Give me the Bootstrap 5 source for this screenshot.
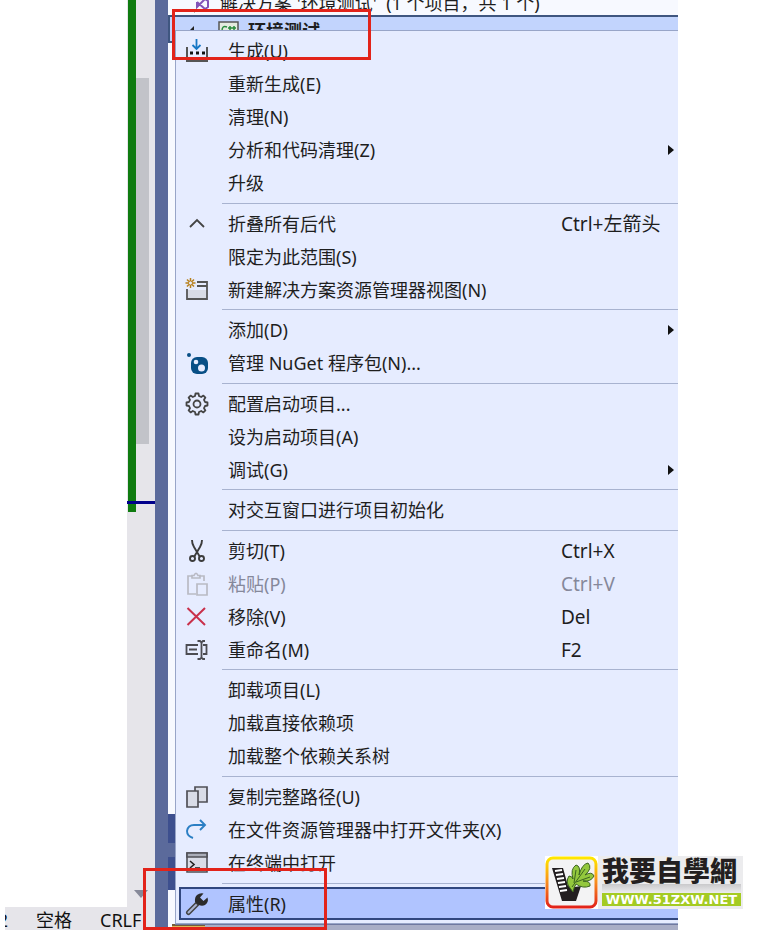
<!DOCTYPE html>
<html lang="zh-CN">
<head>
<meta charset="utf-8">
<meta name="viewport" content="width=device-width, initial-scale=1">
<title>解决方案资源管理器</title>
<link href="https://cdn.jsdelivr.net/npm/bootstrap@5.3.0/dist/css/bootstrap.min.css" rel="stylesheet">
<style>
body{font-family:"Noto Sans","Noto Sans CJK SC",sans-serif;font-size:18px;line-height:24px;color:#1e1e1e;background:#fff}
.ide{display:grid;grid-template-columns:155px 13px minmax(0,1fr) 97px;height:100vh}
.track{width:28px;background:#e6e5ea;padding-left:1px}
.changes{width:8px;height:512px;background:#0f7b10}
.thumb{width:13px;height:366px;margin-top:78px;background:#c2c3c9}
.caret-line{left:0;right:0;top:501px;height:3px;background:#00008b}
.down{right:7px;bottom:9px;border:7px solid transparent;border-top:8px solid #868999;border-bottom:0}
.status{height:23px;margin-left:5px;background:#e6e5ea;line-height:26px;color:#111}
.status .col-no{width:3px;margin-right:28px}
.status .col-sp{width:64px}
.frame{background:#5b6a9b}
.explorer{background:#f7f9ff}
.sol{height:15px;padding-left:26px}
.sol-name{padding-left:10px;margin-top:-9px}
.proj{height:28px;padding-left:17px;background:#c2d4fd;border:2px solid #3f5680;border-right:0}
.proj-name{padding:2px 0 0 8px;font-weight:700}
.tabs-side{width:7px;margin-top:771px}
.tab-dark{height:29px;background:#3d4f8e}
.tab-gap{height:14px;background:#5b6a9b}
.tab-low{height:33px;background:#3d4f8e}
.ctx{left:7px;right:0;top:30px;padding:3px 0 3px 3px;background:#e6ecff;border:1px solid #98a5c8;border-right:0;box-shadow:0 1px 0 #7079a0}
.mi{display:grid;grid-template-columns:49px minmax(0,1fr) 117px;align-items:center;width:100%;height:33px;padding:0;border:0;background:none;color:#1e1e1e;text-align:left;white-space:nowrap}
.mi svg{margin-left:6px}
.mi:disabled{color:#85889a}
.mi.sel{background:#b0c4ff;border:2px solid #31477f;border-right:0;padding-right:0;grid-template-columns:47px minmax(0,1fr)}
.mi.sel svg{margin-left:4px}
.keys{font-size:19px}
.arrow{justify-self:end;margin-right:4px;border:5px solid transparent;border-left:6px solid #111;border-right:0}
.sep{margin:3px 0 3px 43px;border:0;border-top:1px solid #a8b3d0;opacity:1}
.sep.roomy{margin-top:4px}
.below{left:7px;right:0;bottom:0;height:6px;background:#a9aec6}
.below-icon{width:33px;margin-left:-3px;background:#dfb558;border-top:2px solid #735d3a}
.mark-box{border:3px solid #e2231a;pointer-events:none}
.mark-top{left:172px;top:9px;width:199px;height:51px}
.mark-bottom{left:143px;top:868px;width:184px;height:62px}
.brand{right:32px;bottom:21px;height:53px;width:198px;background:#ececee;color:#231f20}
.brand-words{width:139px;margin-left:4px}
.brand-name{font-family:"Noto Sans CJK TC",sans-serif;font-weight:900;font-size:27px;line-height:28px;height:28px;white-space:nowrap}
.brand-shade{height:9px;background:linear-gradient(#c9c9cb,#ececee)}
.brand-url{height:13px;background:#a4cb23;color:#fff;font:bold 13px/13px "DejaVu Sans",sans-serif;text-align:center;text-decoration:none}
</style>
</head>
<body class="overflow-hidden">
<div class="position-relative">
<main class="ide">
  <section class="d-flex flex-column" aria-label="编辑器">
    <div class="d-flex flex-grow-1 justify-content-end">
      <div class="track d-flex position-relative">
        <div class="changes"></div><div class="thumb"></div>
        <div class="caret-line position-absolute"></div><div class="down position-absolute"></div>
      </div>
    </div>
    <footer class="status d-flex overflow-hidden"><span class="col-no d-flex justify-content-end overflow-hidden flex-shrink-0"><span>2</span></span><span class="col-sp">空格</span><span>CRLF</span></footer>
  </section>
  <div class="frame"></div>
  <section class="explorer position-relative overflow-hidden" aria-label="解决方案资源管理器">
    <div class="sol d-flex text-nowrap">
      <svg width="16" height="15" viewBox="0 0 16 15" fill="none"><path d="M-3 0V12H1" stroke="#777"/><path d="M3 2L11 9L14 7V1L11-1L3 7V2" stroke="#8152b8" stroke-width="2"/></svg>
      <span class="sol-name">解决方案 '环境测试'&nbsp; (1 个项目，共 1 个)</span>
    </div>
    <div class="proj d-flex">
      <svg class="mt-2" width="31" height="18" viewBox="0 0 31 18" fill="none"><path d="M7 0V7H0Z" transform="translate(0 1)" fill="#222"/></svg>
      <svg class="mt-1" width="22" height="20" viewBox="0 0 22 20" fill="none"><path d="M1 18V1H20V18Z" stroke="#555" fill="#e3eadf" stroke-width="1.5"/><path d="M9 6Q4 4 4 10M12 5V11M16 5V11M10 7H18M10 10H18" stroke="#278a3c" stroke-width="1.5"/></svg>
      <span class="proj-name">环境测试</span>
    </div>
    <div class="tabs-side"><div class="tab-dark"></div><div class="tab-gap"></div><div class="tab-low"></div></div>
    <div class="below position-absolute"><div class="below-icon h-100"></div></div>
    <div class="ctx position-absolute" role="menu">
      <button class="mi" role="menuitem"><svg width="24" height="26" viewBox="0 0 24 26" fill="none"><path d="M2 9V23H22V9" stroke="#555" stroke-width="2"/><path d="M3 19H21V22H3Z" fill="#777"/><path d="M5 15H8M11 15H14M17 15H20" stroke="#111" stroke-width="3"/><path d="M11.500 1V11M7.500 7L11.500 11L15.500 7" stroke="#1677c5" stroke-width="1.800"/></svg><span>生成(U)</span></button>
      <button class="mi" role="menuitem"><i></i><span>重新生成(E)</span></button>
      <button class="mi" role="menuitem"><i></i><span>清理(N)</span></button>
      <button class="mi" role="menuitem"><i></i><span>分析和代码清理(Z)</span><span class="arrow"></span></button>
      <button class="mi" role="menuitem"><i></i><span>升级</span></button>
      <hr class="sep roomy">
      <button class="mi" role="menuitem"><svg width="24" height="24" viewBox="0 0 24 24" fill="none"><path d="M5 15L12 8L19 15" stroke="#444" stroke-width="1.800"/></svg><span>折叠所有后代</span><span class="keys">Ctrl+左箭头</span></button>
      <button class="mi" role="menuitem"><i></i><span>限定为此范围(S)</span></button>
      <button class="mi" role="menuitem"><svg width="24" height="24" viewBox="0 0 24 24" fill="none"><path d="M3 12H21V20H3Z" fill="#d8dbe5"/><path d="M2 11V21H22V4H12M12 8H22" stroke="#555" stroke-width="1.800"/><path d="M5.500 0V3M5.500 7V10M.5 5H3.500M7.500 5H10.500M2 1.500L4 3.500M7 6.500L9 8.500M2 8.500L4 6.500M7 3.500L9 1.500" stroke="#b7801d" stroke-width="1.500"/><circle cx="5.500" cy="5" r="2" stroke="#b7801d"/></svg><span>新建解决方案资源管理器视图(N)</span></button>
      <hr class="sep">
      <button class="mi" role="menuitem"><i></i><span>添加(D)</span><span class="arrow"></span></button>
      <button class="mi" role="menuitem"><svg width="24" height="24" viewBox="0 0 24 24"><rect x="6" y="6" width="17" height="17" rx="6" fill="#084f86"/><circle cx="4" cy="4" r="2" fill="#084f86"/><circle cx="11" cy="11" r="2.300" fill="#e6ecff"/><circle cx="16.500" cy="17" r="3.500" fill="#e6ecff"/></svg><span>管理 NuGet 程序包(N)...</span></button>
      <hr class="sep roomy">
      <button class="mi" role="menuitem"><svg width="24" height="24" viewBox="0 0 24 24" fill="none" stroke="#444" stroke-width="1.800" stroke-linejoin="round"><path d="M10 4L10.500 1.500H13.500L14 4L16.200 5L18.400 3.600L20.400 5.600L19 7.800L20 10L22.500 10.500V13.500L20 14L19 16.200L20.400 18.400L18.400 20.400L16.200 19L14 20L13.500 22.500H10.500L10 20L7.800 19L5.600 20.400L3.600 18.400L5 16.200L4 14L1.500 13.500V10.500L4 10L5 7.800L3.600 5.600L5.600 3.600L7.800 5Z"/><circle cx="12" cy="12" r="3.500"/></svg><span>配置启动项目...</span></button>
      <button class="mi" role="menuitem"><i></i><span>设为启动项目(A)</span></button>
      <button class="mi" role="menuitem"><i></i><span>调试(G)</span><span class="arrow"></span></button>
      <hr class="sep">
      <button class="mi" role="menuitem"><i></i><span>对交互窗口进行项目初始化</span></button>
      <hr class="sep roomy">
      <button class="mi" role="menuitem"><svg width="24" height="24" viewBox="0 0 24 24" fill="none" stroke="#3c3c3c" stroke-width="1.900"><path d="M7 1Q7 5 9 8L15 18M17 1Q17 5 15 8L9 18"/><circle cx="7.500" cy="19.500" r="2.500"/><circle cx="16.500" cy="19.500" r="2.500"/></svg><span>剪切(T)</span><span class="keys">Ctrl+X</span></button>
      <button class="mi" role="menuitem" disabled><svg width="24" height="24" viewBox="0 0 24 24" fill="none" stroke="#b9bac4" stroke-width="1.700"><path d="M11 22H3V4H7M14 4H19V9M7 6V3.500H9Q11-1 13 3.500H15V6Z"/><path d="M12 12H22V23H12Z"/></svg><span>粘贴(P)</span><span class="keys">Ctrl+V</span></button>
      <button class="mi" role="menuitem"><svg width="24" height="24" viewBox="0 0 24 24" fill="none"><path d="M2.500 3L20 20M20 3L2.500 20" stroke="#c9304b" stroke-width="2"/></svg><span>移除(V)</span><span class="keys">Del</span></button>
      <button class="mi" role="menuitem"><svg width="24" height="24" viewBox="0 0 24 24" fill="none" stroke="#4c4c52" stroke-width="1.800"><path d="M13 7H1.500V16H13M4 11.500H12M18 7H21.500V16H18M12.500 3H15L16.500 4.500L18 3H20M12.500 21H15L16.500 19.500L18 21H20M16.500 4V20"/></svg><span>重命名(M)</span><span class="keys">F2</span></button>
      <hr class="sep">
      <button class="mi" role="menuitem"><i></i><span>卸载项目(L)</span></button>
      <button class="mi" role="menuitem"><i></i><span>加载直接依赖项</span></button>
      <button class="mi" role="menuitem"><i></i><span>加载整个依赖关系树</span></button>
      <hr class="sep roomy">
      <button class="mi" role="menuitem"><svg width="24" height="24" viewBox="0 0 24 24" fill="#d9dce7" stroke="#505057" stroke-width="1.700"><path d="M10 2H22V17H10Z"/><path d="M2 6H13V22H2Z"/></svg><span>复制完整路径(U)</span></button>
      <button class="mi" role="menuitem"><svg width="24" height="24" viewBox="0 0 24 24" fill="none" stroke="#2b7fc4" stroke-width="1.900"><path d="M8 20Q2 18 2 13Q3 7 9 7H20M15 2L20 7L15 12"/></svg><span>在文件资源管理器中打开文件夹(X)</span></button>
      <button class="mi" role="menuitem"><svg width="24" height="24" viewBox="0 0 24 24" fill="none" stroke="#505057" stroke-width="1.600"><path d="M2 2H22V21H2Z" fill="#d9dce7"/><path d="M2 2H22V6H2Z" fill="#aaadb8"/><path d="M5 10L9 13.500L5 17M10 17H15" stroke="#222"/></svg><span>在终端中打开</span></button>
      <hr class="sep roomy">
      <button class="mi sel" role="menuitem"><svg width="24" height="24" viewBox="0 0 24 24"><path d="M3.500 20.500L13 11" stroke="#444" stroke-width="5" stroke-linecap="round"/><path d="M3.500 20.500L11 13" stroke="#aab4d2" stroke-width="2" stroke-linecap="round"/><path d="M18.500 1.500L15 5.500L18.500 9L22.500 5.500Q24 10 20 13Q17 14.500 14 13L10 10Q9.500 5 12 3Q15 .5 18.500 1.500Z" fill="#2b2b2b"/></svg><span>属性(R)</span></button>
    </div>
  </section>
  <div></div>
</main>
<div class="mark-box mark-top position-absolute"></div>
<div class="mark-box mark-bottom position-absolute"></div>
<div class="brand position-absolute d-flex">
  <svg width="53" height="53" viewBox="0 0 53 53"><defs><linearGradient id="edge" x2="0" y2="1"><stop stop-color="#ffe600"/><stop offset=".5" stop-color="#f78b1f"/><stop offset="1" stop-color="#e2231a"/></linearGradient></defs><rect width="53" height="53" fill="#fff"/><rect x="2" y="2" width="49" height="49" rx="6" fill="#f3f3f4" stroke="url(#edge)" stroke-width="3"/><path d="M7 12H18L23 30L30 31L36 30L31 45H17Z" fill="#231f20"/><path d="M10 15L17 14M11 19L18 18M12 23L19 22M13 27L20 26M14 31L21 30M15 35L22 34" stroke="#fff" stroke-width="2"/><path d="M25 32Q20 26 24 20Q27 20 28 23Q25 13 31 9Q36 10 34 19Q37 8 43 7Q48 12 40 19Q47 15 49 20Q46 26 38 25Q46 25 45 30Q38 33 31 28Q29 31 28 36Z" fill="#93c83d" stroke="#3c6420"/><path d="M27 31L40 13M29 27L31 14M31 26L45 21" stroke="#3c6420" fill="none"/></svg>
  <div class="brand-words d-flex flex-column"><span class="brand-name">我要自學網</span><span class="brand-shade"></span><a class="brand-url" href="#">WWW.51ZXW.NET</a></div>
</div>
</div>
<script src="https://cdn.jsdelivr.net/npm/bootstrap@5.3.0/dist/js/bootstrap.bundle.min.js"></script>
</body>
</html>
